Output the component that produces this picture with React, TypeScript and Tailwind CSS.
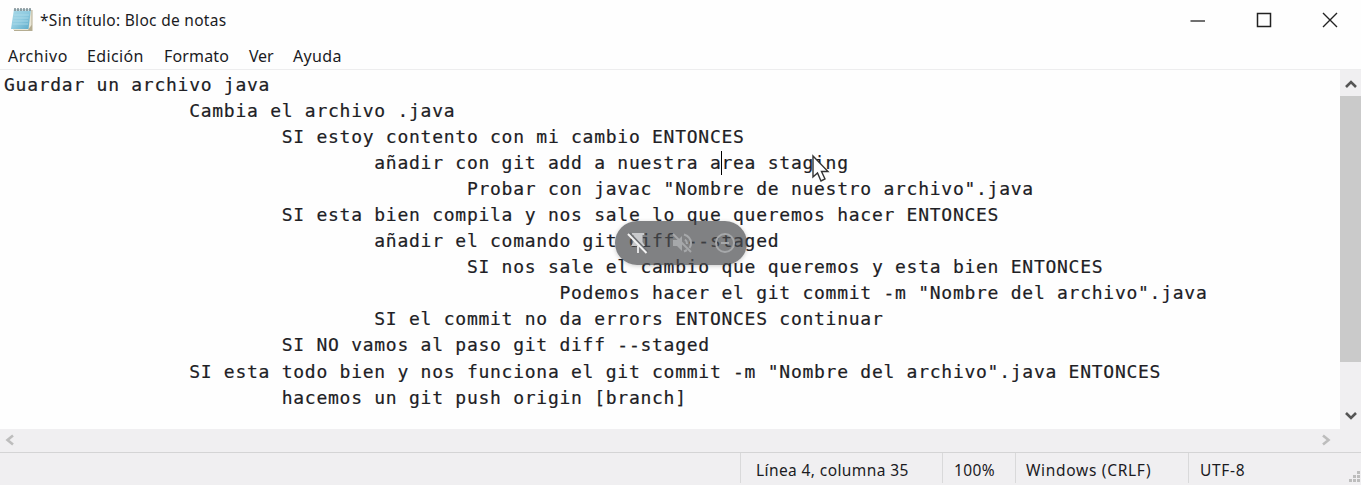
const lines = [
  { text: 'Guardar un archivo java', tabs: 0 },
  { text: 'Cambia el archivo .java', tabs: 2 },
  { text: 'SI estoy contento con mi cambio ENTONCES', tabs: 3 },
  { text: 'añadir con git add a nuestra area staging', tabs: 4 },
  { text: 'Probar con javac "Nombre de nuestro archivo".java', tabs: 5 },
  { text: 'SI esta bien compila y nos sale lo que queremos hacer ENTONCES', tabs: 3 },
  { text: 'añadir el comando git diff --staged', tabs: 4 },
  { text: 'SI nos sale el cambio que queremos y esta bien ENTONCES', tabs: 5 },
  { text: 'Podemos hacer el git commit -m "Nombre del archivo".java', tabs: 6 },
  { text: 'SI el commit no da errors ENTONCES continuar', tabs: 4 },
  { text: 'SI NO vamos al paso git diff --staged', tabs: 3 },
  { text: 'SI esta todo bien y nos funciona el git commit -m "Nombre del archivo".java ENTONCES', tabs: 2 },
  { text: 'hacemos un git push origin [branch]', tabs: 3 },
];

function NotepadIcon() {
  return (
    <svg width="24" height="26" viewBox="0 0 24 26" className="shrink-0">
      <defs>
        <linearGradient id="page" x1="0" y1="0" x2="1" y2="1">
          <stop offset="0" stopColor="#a9d9e8" />
          <stop offset="0.5" stopColor="#8fcbe0" />
          <stop offset="1" stopColor="#5aa9c8" />
        </linearGradient>
      </defs>
      <path d="M5 3H22.5V24H4Z" fill="#b5ad92" />
      <path d="M5 3H21.5V18L18 23H3Z" fill="#e9e6d6" />
      <path d="M4 2H21L18.5 22H1Z" fill="url(#page)" />
      <path d="M4 2H21L20.7 4H3.7Z" fill="#c9dde2" />
      <path d="M5 1v3M8 1v3M11 1v3M14 1v3M17 1v3M20 1v3" stroke="#61737a" strokeWidth="1.2" />
      <path d="M4 8H19M3.5 11H18.5M3 14H18M2.5 17H18" stroke="#b5e0ec" strokeWidth=".7" />
    </svg>
  );
}

function Chevron({ d, color, className }: { d: string; color: string; className: string }) {
  return (
    <svg width="12" height="12" viewBox="0 0 12 12" fill="none" className={className}>
      <path d={d} stroke={color} strokeWidth="2.6" />
    </svg>
  );
}

export default function App() {
  return (
    <div className="relative flex h-[485px] w-[1361px] flex-col overflow-hidden bg-[#fefefe] font-['Noto_Sans',sans-serif] text-[#1b1b1f]">
      <header className="flex h-10 shrink-0 items-center pl-[10px]">
        <NotepadIcon />
        <h1 className="ml-[6px] whitespace-nowrap pt-px text-[15.5px] tracking-[0.29px]">*Sin título: Bloc de notas</h1>
        <div className="ml-auto flex items-center pb-px pr-[23px]">
          <svg width="16" height="16" viewBox="0 0 16 16" className="mr-[50px]"><path d="M0.5 9H15" stroke="#333" strokeWidth="1.4" /></svg>
          <svg width="16" height="16" viewBox="0 0 16 16" className="mr-[50px]"><rect x="1.5" y="1.5" width="13" height="13" fill="none" stroke="#222" strokeWidth="1.5" /></svg>
          <svg width="16" height="16" viewBox="0 0 16 16"><path d="M1 1L15 15M15 1L1 15" stroke="#222" strokeWidth="1.4" /></svg>
        </div>
      </header>
      <nav className="flex h-[30px] shrink-0 items-center border-b border-[#ededee] pl-[8px] pt-[3px] text-[16px] tracking-[0.35px]">
        <span className="w-[79px] tracking-[0.55px]">Archivo</span>
        <span className="w-[77px]">Edición</span>
        <span className="w-[85px] tracking-[0.15px]">Formato</span>
        <span className="w-[44px] tracking-[-0.2px]">Ver</span>
        <span>Ayuda</span>
      </nav>
      <div className="flex h-[359px] shrink-0">
        <main className="min-w-0 flex-1 whitespace-pre pl-[4px] pt-[2px] font-['DejaVu_Sans_Mono',monospace] text-[18px] leading-[26.05px] tracking-[0.735px] text-[#202024] [-webkit-text-stroke:0.2px_#202024]">
          {lines.map((line) => (
            <div key={line.text}>{' '.repeat(line.tabs * 8) + line.text}</div>
          ))}
        </main>
        <aside className="flex w-[21px] flex-col items-center bg-[#f0eff1]">
          <Chevron d="M1 9L6 4L11 9" color="#555" className="mt-[8px] mb-[6px] shrink-0" />
          <div className="h-[266px] w-full shrink-0 bg-[#cacaca]" />
          <Chevron d="M1 3L6 8L11 3" color="#555" className="mt-auto mb-[7px]" />
        </aside>
      </div>
      <div className="flex h-[23px] shrink-0 items-center justify-between bg-[#f0eff1] pb-[2px] pl-[4px] pr-[29px]">
        <Chevron d="M9 1.5L3.5 6L9 10.5" color="#bdbdbd" className="" />
        <Chevron d="M3 1.5L8.5 6L3 10.5" color="#bdbdbd" className="" />
      </div>
      <footer className="flex min-h-0 flex-1 border-t border-[#d4d4d5] bg-[#f0eff1] pl-[740px] text-[15.5px] leading-[34px]">
        <span className="h-[30px] w-[202px] border-l border-[#d9d9da] pl-[15px] tracking-[0.4px]">Línea 4, columna 35</span>
        <span className="h-[30px] w-[73px] border-l border-[#d9d9da] pl-[11px] tracking-[0.4px]">100%</span>
        <span className="h-[30px] w-[173px] border-l border-[#d9d9da] pl-[10px] tracking-[0.7px]">Windows (CRLF)</span>
        <span className="h-[30px] border-l border-[#d9d9da] pl-[11px] tracking-[0.7px]">UTF-8</span>
        <svg width="13" height="13" viewBox="0 0 13 13" className="ml-auto mt-[17px]" fill="#bdbdbd">
          <path d="M9 1h3v3h-3zM5 5h3v3h-3zM9 5h3v3h-3zM1 9h3v3h-3zM5 9h3v3h-3zM9 9h3v3h-3z" />
        </svg>
      </footer>
      <div className="absolute left-[721px] top-[151px] h-[24px] w-px bg-black" />
      <svg className="absolute left-[811px] top-[154px]" width="20" height="30" viewBox="0 0 20 30">
        <path d="M2 2V23L6.5 19L10 27L14 25L10.5 17.5H17Z" fill="#fff" stroke="#333" strokeWidth="1.4" />
      </svg>
      <div className="absolute left-[615px] top-[221px] flex h-[44px] w-[132px] items-center gap-[20px] rounded-full bg-[#4a4c4e]/70 pl-[11px] shadow-[0_1px_4px_rgba(0,0,0,0.2)]">
        <svg width="24" height="24" viewBox="0 0 24 24" fill="none">
          <path d="M6 2H18V4H16.5V11L19 15H5L7.5 11V4H6Z" fill="#c9cacc" />
          <path d="M12 15V22" stroke="#e2e2e3" strokeWidth="2" />
          <path d="M3.5 2L21.5 21" stroke="#6f7174" strokeWidth="2" />
          <path d="M2 3L20.5 22" stroke="#f2f2f2" strokeWidth="2" />
        </svg>
        <svg width="24" height="24" viewBox="0 0 24 24" fill="none" stroke="#a6a8aa" strokeWidth="2">
          <path d="M3 9V15H7L12 20V5L8 9Z" fill="#a6a8aa" stroke="none" />
          <path d="M15 8.5Q17 10 17 13M14 3.5Q21 6 21 12Q21 15 19.5 17M14 20.5L17 19" />
          <path d="M3 3L21 21" />
        </svg>
        <svg width="24" height="24" viewBox="0 0 24 24" fill="none" stroke="#a6a8aa" strokeWidth="2" className="-ml-px">
          <circle cx="12" cy="12" r="9" />
          <path d="M8 12H16" />
        </svg>
      </div>
    </div>
  );
}
